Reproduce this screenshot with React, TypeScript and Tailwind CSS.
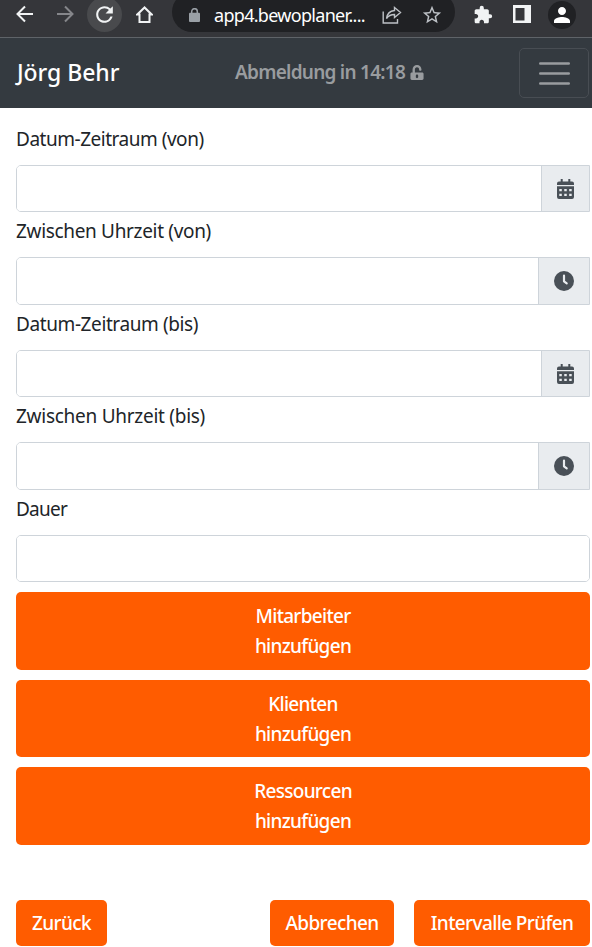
import { useState } from 'react';
import type { ReactNode } from 'react';
import { FaUnlockAlt } from 'react-icons/fa';
import { MdExtension, MdPerson, MdRefresh, MdStarBorder } from 'react-icons/md';

const BrowserBar = () => (
  <div className="flex h-[38px] items-start overflow-hidden border-b border-[#5f6368] bg-[#35363a] text-[#f1f3f4]">
    <svg className="mt-[5px] ml-4 h-[18px] w-[18px] shrink-0" viewBox="0 0 18 18" fill="none" stroke="currentColor" strokeWidth="2">
      <path d="M17 9H2M9 1.5 1.5 9 9 16.5" />
    </svg>
    <svg className="mt-[5px] ml-[22px] h-[18px] w-[18px] shrink-0 text-[#85868a]" viewBox="0 0 18 18" fill="none" stroke="currentColor" strokeWidth="2">
      <path d="M1 9h15M9 1.5 16.5 9 9 16.5" />
    </svg>
    <div className="-mt-[3px] ml-[13px] flex h-[35px] w-[35px] shrink-0 items-center justify-center rounded-full bg-[#494a4d]">
      <MdRefresh className="h-[25px] w-[25px]" />
    </div>
    <svg className="mt-1.5 ml-[14px] h-[18px] w-[17px] shrink-0" viewBox="0 0 17 18" fill="none" stroke="currentColor" strokeWidth="2">
      <path d="M8.500 1.500 1.300 8.500H3.500V16H13.500V8.500H15.700Z" />
    </svg>
    <div className="-mt-[8px] ml-[19px] flex h-10 w-[283px] shrink-0 items-center rounded-full bg-[#202124] pt-[6px]">
      <svg className="ml-[17px] h-[14px] w-[11px] shrink-0 text-[#9aa0a6]" viewBox="0 0 11 14">
        <path d="M2.700 6V3.500a2.800 2.800 0 0 1 5.600 0V6" fill="none" stroke="currentColor" strokeWidth="1.500" />
        <rect y="4.800" width="11" height="9.200" rx="1" fill="currentColor" />
      </svg>
      <span className="ml-[14px] w-[151px] text-[18px] leading-6 tracking-[-0.7px] whitespace-nowrap text-white">
        app4.bewoplaner....
      </span>
      <svg className="ml-[17px] h-[18px] w-[20px] shrink-0 text-[#bdc1c6]" viewBox="0 0 20 18" fill="none" stroke="currentColor" strokeWidth="1.400">
        <path d="M1.200 5.500V17H15.500V13" />
        <path d="M12.500 1.500 18.500 6.500 12.500 11.500V8.500C9 8.500 6.500 9.500 4.500 12.500 5 8.500 7.500 5 12.500 4.500Z" />
      </svg>
      <MdStarBorder className="ml-[19px] h-[22px] w-[22px] shrink-0 text-[#bdc1c6]" />
    </div>
    <MdExtension className="mt-[5px] ml-[18px] h-[20px] w-[20px] shrink-0" />
    <svg className="mt-[5px] ml-5 h-[18px] w-[18px] shrink-0" viewBox="0 0 18 18">
      <path fill="currentColor" fillRule="evenodd" d="M0 0H18V18H0ZM2.500 3V15.500H11.500V3Z" />
    </svg>
    <div className="mt-[1px] ml-[17px] flex h-7 w-7 shrink-0 items-center justify-center rounded-full bg-[#202124]">
      <MdPerson className="h-6 w-6 text-white" />
    </div>
  </div>
);

const Navbar = () => (
  <nav className="flex h-[70px] items-center bg-[#343a40] pr-[3px] pl-[17px]">
    <span className="w-[218px] pb-0.5 text-[23px] font-medium tracking-[-0.05px] whitespace-nowrap text-white">
      Jörg Behr
    </span>
    <span className="flex items-center pb-0.5 text-[19px] font-semibold tracking-[-0.75px] whitespace-nowrap text-[#999c9f]">
      <span className="w-[175px]">Abmeldung in 14:18</span>
      <FaUnlockAlt className="h-[15px] w-[14px]" />
    </span>
    <button
      type="button"
      aria-label="Menü"
      className="ml-auto flex h-[50px] w-[70px] items-center justify-center rounded-[5px] border border-[#484d53]"
    >
      <svg className="h-[26px] w-[31px]" viewBox="0 0 31 26" stroke="#999c9f" strokeWidth="2.400" strokeLinecap="round">
        <path d="M1.200 3.500H29.800M1.200 13.500H29.800M1.200 23.500H29.800" />
      </svg>
    </button>
  </nav>
);

interface FieldProps {
  label: string;
  labelClass: string;
  boxClass: string;
  addonClass?: string;
  icon?: ReactNode;
}

const Field = ({ label, labelClass, boxClass, addonClass, icon }: FieldProps) => {
  const [value, setValue] = useState('');

  return (
    <label className="block">
      <span className={`block h-[45px] pt-[5px] text-[19px] leading-[29px] whitespace-nowrap text-[#212529] ${labelClass}`}>
        {label}
      </span>
      <span className={`flex overflow-hidden border border-[#ced4da] ${boxClass}`}>
        <input
          type="text"
          value={value}
          onChange={(e) => setValue(e.target.value)}
          className="min-w-0 flex-1 bg-white px-4 outline-none"
        />
        {icon && (
          <span className={`flex items-center justify-center border-l border-[#ced4da] bg-[#e9ecef] text-[#495057] ${addonClass}`}>
            {icon}
          </span>
        )}
      </span>
    </label>
  );
};

const addButtons = [
  { label: 'Mitarbeiter', size: 'h-[78px]' },
  { label: 'Klienten', size: 'h-[77px]' },
  { label: 'Ressourcen', size: 'h-[78px]' },
];

const calendarIcon = (
  <svg className="h-5 w-[17px]" viewBox="0 0 17 20" fill="currentColor">
    <path d="M3.700 0h2v2.500h5.600V0h2v2.500H15a2 2 0 0 1 2 2V6H0V4.500a2 2 0 0 1 2-2h1.700Z" />
    <path
      fillRule="evenodd"
      d="M0 7.200H17V18a2 2 0 0 1-2 2H2a2 2 0 0 1-2-2ZM2.300 10v2.300h2.500V10ZM7.250 10v2.300h2.500V10ZM12.200 10v2.300h2.500V10ZM2.300 14.800v2.300h2.500v-2.300ZM7.250 14.800v2.300h2.500v-2.300ZM12.200 14.800v2.300h2.500v-2.300Z"
    />
  </svg>
);

const clockIcon = (
  <svg className="h-5 w-5" viewBox="0 0 20 20" fill="none">
    <circle cx="10" cy="10" r="10" fill="currentColor" />
    <path d="M10 4.700V10.300L12.700 12.300" stroke="#e9ecef" strokeWidth="2.200" strokeLinecap="round" strokeLinejoin="round" />
  </svg>
);

const App = () => (
  <div className="h-[947px] w-[592px] overflow-hidden bg-white font-['Noto_Sans','Open_Sans',sans-serif]">
    <BrowserBar />
    <Navbar />
    <main className="pt-3 pr-[2px] pl-4">
      <Field label="Datum-Zeitraum (von)" labelClass="tracking-[-0.48px]" boxClass="h-[47px] rounded-l-[5px]" addonClass="w-[48px]" icon={calendarIcon} />
      <Field label="Zwischen Uhrzeit (von)" labelClass="tracking-[-0.33px]" boxClass="h-[48px] rounded-l-[5px]" addonClass="w-[51px]" icon={clockIcon} />
      <Field label="Datum-Zeitraum (bis)" labelClass="tracking-[-0.4px]" boxClass="h-[47px] rounded-l-[5px]" addonClass="w-[48px]" icon={calendarIcon} />
      <Field label="Zwischen Uhrzeit (bis)" labelClass="tracking-[-0.27px]" boxClass="h-[48px] rounded-l-[5px]" addonClass="w-[51px]" icon={clockIcon} />
      <Field label="Dauer" labelClass="tracking-[-0.75px]" boxClass="h-[47px] rounded-[5px]" />
      <div className="mt-[10px] flex flex-col gap-[10px]">
        {addButtons.map(({ label, size }) => (
          <button
            key={label}
            type="button"
            className={`rounded-[5px] bg-[#ff5c00] text-[19px] leading-[30px] font-medium tracking-[-0.7px] text-white ${size}`}
          >
            {label}
            <br />
            hinzufügen
          </button>
        ))}
      </div>
      <div className="mt-[55px] flex h-[46px] text-[19px] font-medium tracking-[-0.62px] whitespace-nowrap text-white">
        <button type="button" className="w-[91px] rounded-[5px] bg-[#ff5c00]">Zurück</button>
        <button type="button" className="ml-auto w-[124px] rounded-[5px] bg-[#ff5c00]">Abbrechen</button>
        <button type="button" className="ml-5 w-[176px] rounded-[5px] bg-[#ff5c00]">Intervalle Prüfen</button>
      </div>
    </main>
  </div>
);

export default App;
